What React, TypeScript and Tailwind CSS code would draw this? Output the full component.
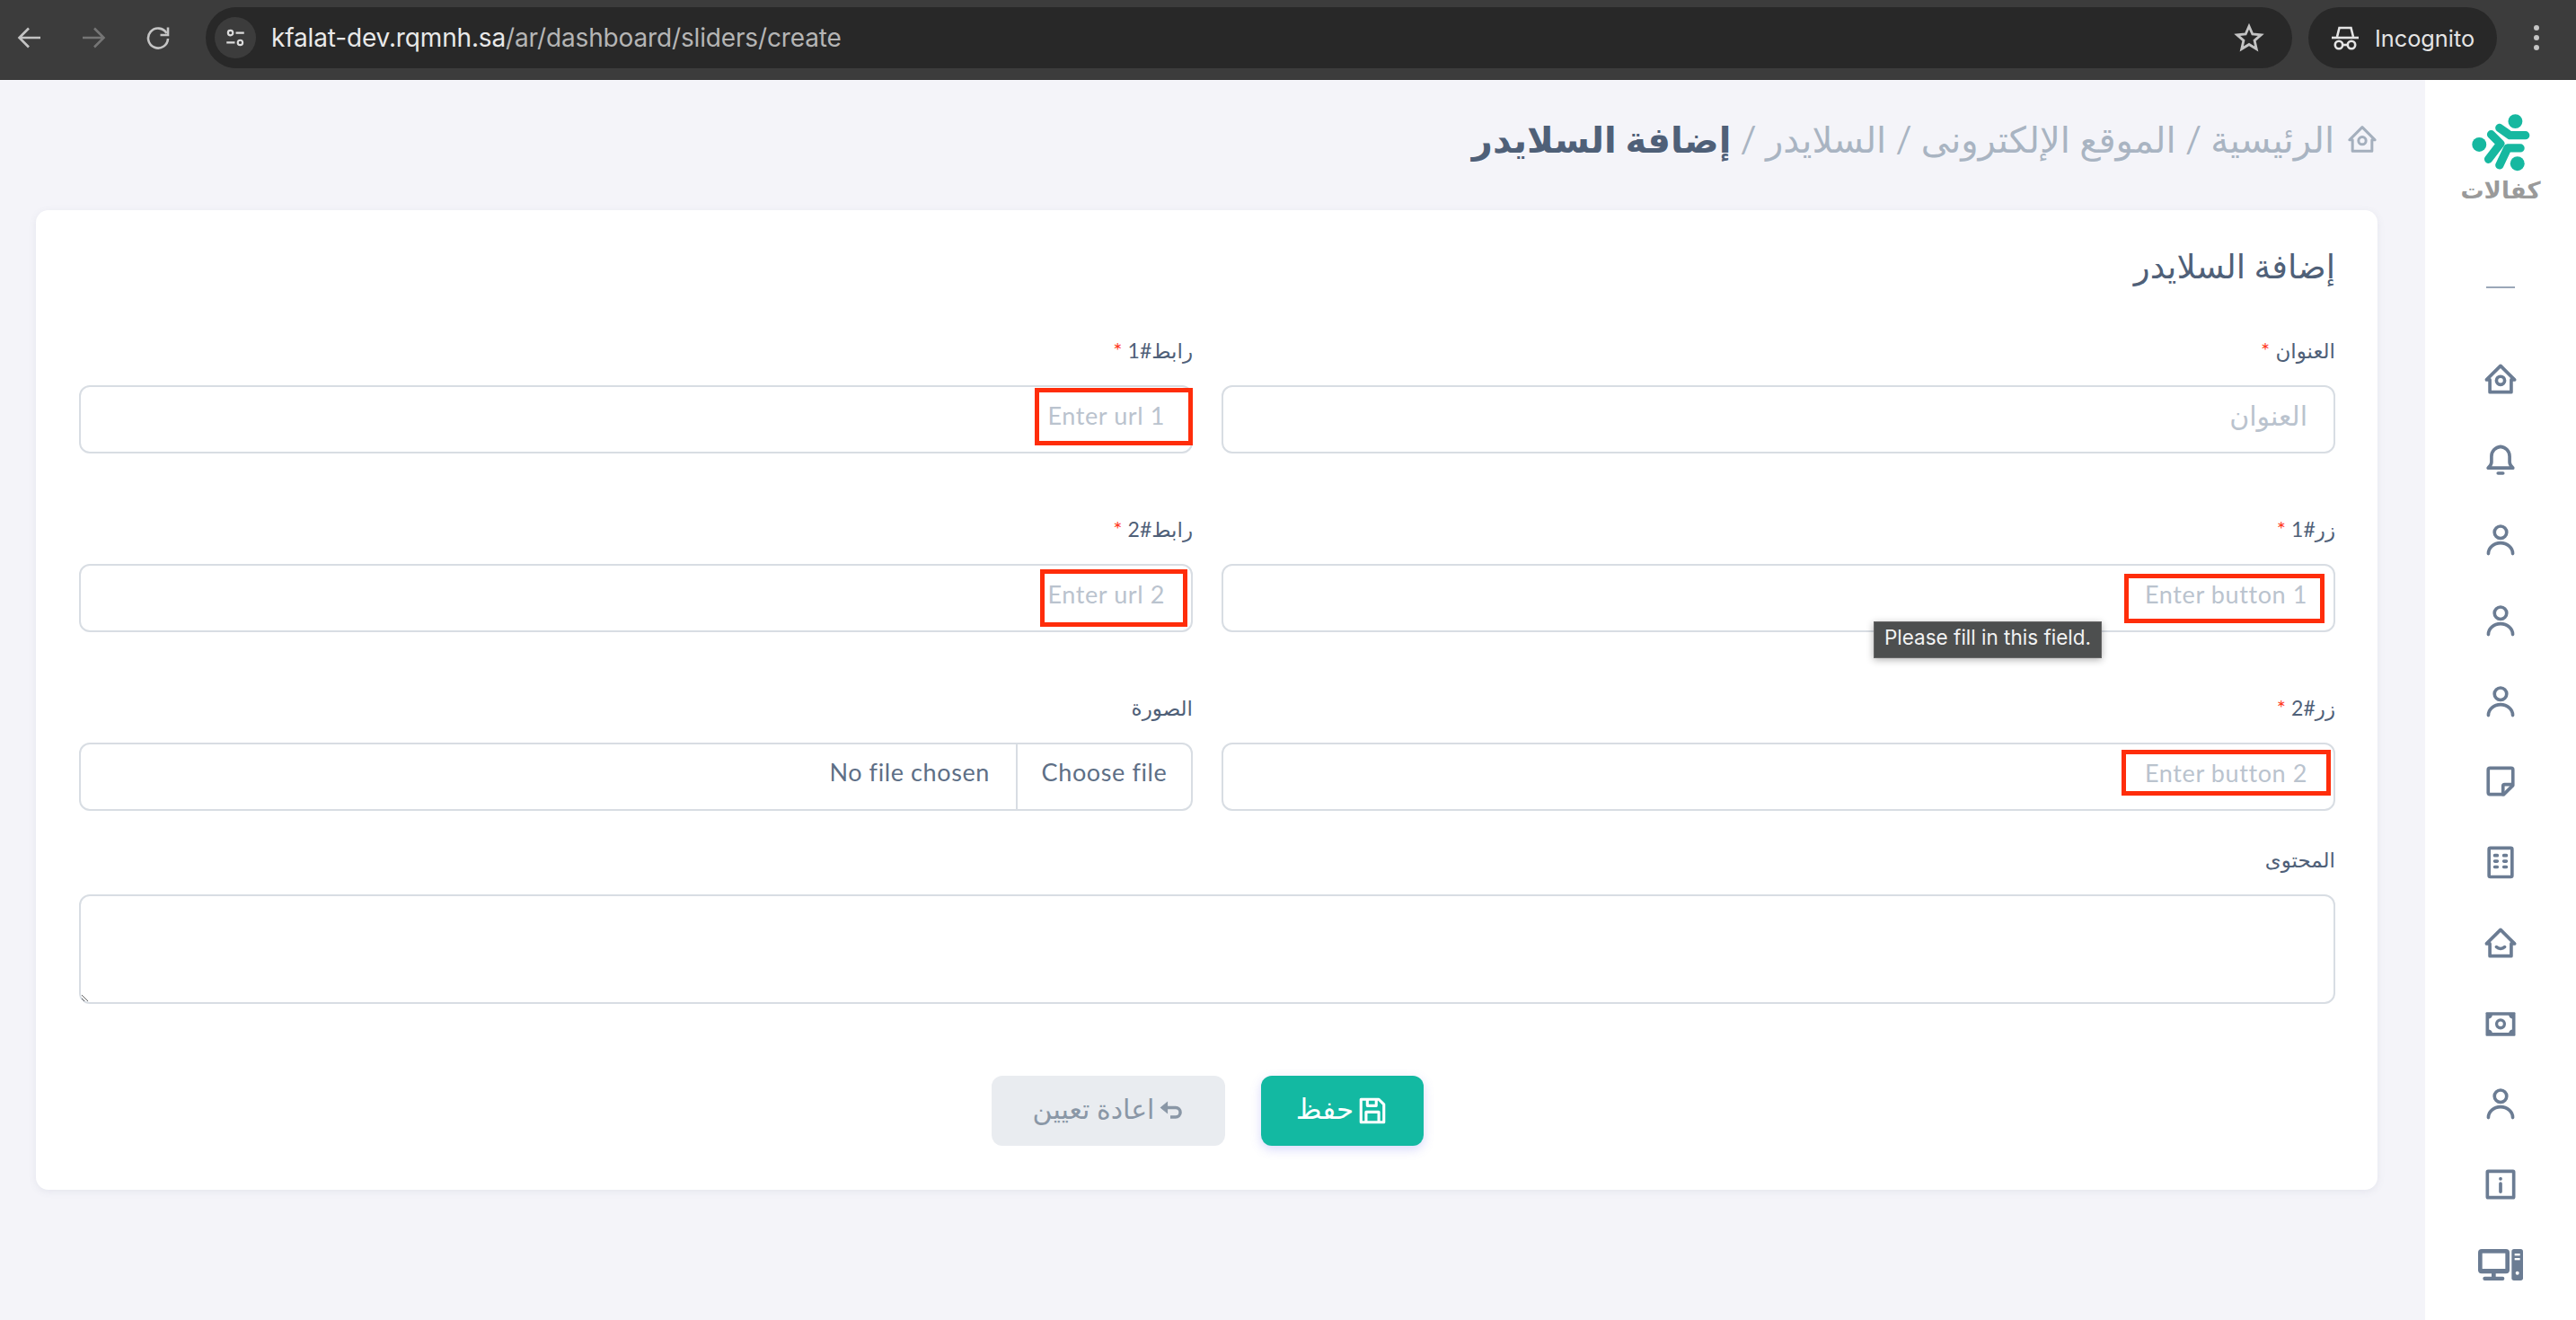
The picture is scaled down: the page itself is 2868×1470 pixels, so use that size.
import React from "react";

const Ico = ({ children }: { children: React.ReactNode }) => (
  <svg viewBox="0 0 24 24" className="w-[44px] h-[44px] text-[#6b7c93]" fill="none" stroke="currentColor" strokeWidth="2" strokeLinecap="round" strokeLinejoin="round">
    {children}
  </svg>
);

const homeBase = "M5.5 12.5H3.5L12 4l8.5 8.5h-2 M5.5 12.5V20h13v-7.5";

const HomeCircle = () => (
  <Ico>
    <path d={homeBase} />
    <circle cx="12" cy="13" r="2.5" />
  </Ico>
);
const Bell = () => (
  <Ico>
    <path d="M12 4a6 6 0 0 0-5.5 6v3.5c0 1.5-1 2.5-2 3.500h15c-1-1-2-2-2-3.500V10A6 6 0 0 0 12 4Z" />
    <path d="M10.500 20.200h3" />
  </Ico>
);
const User = () => (
  <Ico>
    <circle cx="12" cy="7.500" r="3.700" />
    <path d="M4.600 20.500a7.400 6.500 0 0 1 14.800 0" />
  </Ico>
);
const Note = () => (
  <Ico>
    <path d="M4.500 5a1 1 0 0 1 1-1h13a1 1 0 0 1 1 1v9.500L14 20H5.500a1 1 0 0 1-1-1Z" />
    <path d="M19 14h-4.500a1 1 0 0 0-1 1v5" />
  </Ico>
);
const Building = () => (
  <Ico>
    <rect x="5" y="3.500" width="14" height="17.500" rx="0.800" />
    <path d="M8.500 8h1.500M14 8h1.500M8.500 11.500h1.500M14 11.500h1.500M8.500 15h1.500M14 15h1.500" />
  </Ico>
);
const HomeSmile = () => (
  <Ico>
    <path d={homeBase} />
    <path d="M9.500 14.500a3.500 3.500 0 0 0 5 0" />
  </Ico>
);
const Cash = () => (
  <svg viewBox="0 0 24 24" className="w-[44px] h-[44px] text-[#6b7c93]">
    <rect x="3" y="5" width="18" height="14.500" rx="0.600" fill="currentColor" />
    <path d="M7 7h10a2.500 2.500 0 0 0 2 2v6.500a2.500 2.500 0 0 0-2 2H7a2.500 2.500 0 0 0-2-2V9a2.500 2.500 0 0 0 2-2Z" fill="#fff" />
    <circle cx="12" cy="12.200" r="2.400" fill="none" stroke="currentColor" strokeWidth="1.800" />
  </svg>
);
const Info = () => (
  <Ico>
    <rect x="4" y="4" width="16" height="16" rx="0.400" />
    <path d="M12 8.500v.2M12 11.500v5" />
  </Ico>
);
const Desktop = () => (
  <svg viewBox="0 0 150 105" className="w-[50px] h-[35px] text-[#6b7c93]" fill="currentColor">
    <rect x="0" y="0" width="105" height="82" rx="12" />
    <rect x="14" y="14" width="77" height="52" fill="#fff" />
    <rect x="45" y="80" width="14" height="14" />
    <rect x="16" y="92" width="72" height="13" rx="6" />
    <rect x="112" y="0" width="38" height="105" rx="8" />
    <rect x="122" y="15" width="18" height="7" fill="#fff" />
    <rect x="122" y="30" width="18" height="7" fill="#fff" />
    <circle cx="131" cy="80" r="6" fill="#fff" />
  </svg>
);

const Logo = () => (
  <svg viewBox="200 70 220 210" className="w-[73px] h-[70px]" fill="none" stroke="#16b8a0" strokeWidth="28" strokeLinecap="round" strokeLinejoin="round">
    <circle cx="358" cy="103" r="24" fill="#16b8a0" stroke="none" />
    <circle cx="237" cy="181" r="24" fill="#16b8a0" stroke="none" />
    <circle cx="365" cy="245" r="24" fill="#16b8a0" stroke="none" />
    <path d="M305 125 340 150H392" />
    <path d="M277 147 308 178 268 230" />
    <path d="M375 193H332L305 250" />
  </svg>
);

const RedBox = ({ className }: { className: string }) => (
  <div className={`absolute border-[5px] border-[#ff2d0a] pointer-events-none ${className}`} />
);

const Label = ({ text, req = true }: { text: string; req?: boolean }) => (
  <label className="block h-[30px] mb-[24px] text-[23px] leading-[30px] text-[#4f6078]">
    {text}
    {req && <span className="text-[#ff3b1f] text-[24px]"> *</span>}
  </label>
);

const inputCls =
  "block w-full h-[76px] rounded-[12px] border-2 border-[#d8dde3] bg-white pr-[29px] pl-[20px] pb-[10px] tracking-[0.6px] outline-none placeholder:text-[#bac3ce]";

const Field = ({ label, ph, strong, arabic, children }: { label: string; ph: string; strong?: boolean; arabic?: boolean; children?: React.ReactNode }) => (
  <div>
    <Label text={label} />
    <div className="relative">
      <input placeholder={ph} className={`${inputCls} ${arabic ? "text-[30px]" : "text-[27px]"} ${strong ? "border-[#c3c8d2]" : ""}`} />
      {children}
    </div>
  </div>
);

const Chrome = () => (
  <div dir="ltr" className="h-[89px] shrink-0 bg-[#3c3c3c] border-b border-[#333] flex items-center pb-[4px] font-[Inter,sans-serif]">
    <div className="w-[229px] shrink-0 flex items-center text-[#c4c4c4]">
      <svg viewBox="0 0 28 28" className="ml-[19px] w-[28px] h-[28px]" fill="none" stroke="currentColor" strokeWidth="2.600">
        <path d="M26 14H3M13 3.500 2.500 14 13 24.500" />
      </svg>
      <svg viewBox="0 0 28 28" className="ml-[43px] w-[28px] h-[28px] text-[#757575]" fill="none" stroke="currentColor" strokeWidth="2.600">
        <path d="M2 14h23M15 3.500 25.500 14 15 24.500" />
      </svg>
      <svg viewBox="0 0 28 28" className="ml-[44px] w-[28px] h-[28px]" fill="none" stroke="currentColor" strokeWidth="2.600">
        <path d="M23.500 9A11 11 0 1 0 25 15" />
        <path d="M25 2.500v8.500h-8.500" />
      </svg>
    </div>
    <div className="h-[68px] w-[2323px] rounded-full bg-[#282828] flex items-center pl-[10px] pr-[31px] shrink-0">
      <div className="w-[46px] h-[46px] rounded-full bg-[#3c3c3c] flex items-center justify-center">
        <svg viewBox="0 0 24 24" className="w-[26px] h-[26px]" fill="none" stroke="#dcdcdc" strokeWidth="2">
          <circle cx="7" cy="7" r="2.500" />
          <path d="M12.500 7H21M3 17h8.500" />
          <circle cx="17" cy="17" r="2.500" />
        </svg>
      </div>
      <div className="ml-[17px] text-[28px] tracking-[-0.15px] text-[#e9e9e9] whitespace-nowrap">
        kfalat-dev.rqmnh.sa<span className="text-[#b5b5b5]">/ar/dashboard/sliders/create</span>
      </div>
      <svg viewBox="0 0 24 24" className="ml-auto w-[34px] h-[34px]" fill="none" stroke="#c4c4c4" strokeWidth="2" strokeLinejoin="miter">
        <path d="m12 3 2.700 6.200 6.700.6-5.100 4.400 1.500 6.600L12 17.300l-5.800 3.500 1.500-6.600-5.100-4.400 6.700-.6Z" />
      </svg>
    </div>
    <div className="ml-[18px] h-[68px] w-[210px] rounded-full bg-[#282828] flex items-center pl-[26px] shrink-0">
      <svg viewBox="0 0 30 28" className="w-[30px] h-[28px]" fill="none" stroke="#e4e4e4" strokeWidth="2.600">
        <path d="M0 14h30" />
        <path d="M6 13 8.500 3h13L24 13" />
        <circle cx="8" cy="22" r="4.200" />
        <circle cx="22" cy="22" r="4.200" />
        <path d="M12 22h6" />
      </svg>
      <span className="ml-[18px] text-[25.300px] leading-[34px] pt-[2px] text-[#e4e4e4]">Incognito</span>
    </div>
    <div className="ml-[41px] flex flex-col gap-[5px]">
      <div className="w-[6px] h-[6px] rounded-full bg-[#c4c4c4]" />
      <div className="w-[6px] h-[6px] rounded-full bg-[#c4c4c4]" />
      <div className="w-[6px] h-[6px] rounded-full bg-[#c4c4c4]" />
    </div>
  </div>
);

const Sidebar = () => (
  <aside className="w-[168px] shrink-0 bg-white flex flex-col items-center">
    <div className="mt-[35px] h-[106px] flex flex-col items-center">
      <Logo />
      <div className="mt-[2px] text-[26px] leading-[32px] font-bold text-[#9a9a9a] font-['DejaVu_Sans',sans-serif]">كفالات</div>
    </div>
    <div className="mt-[89px] w-[32px] h-[2px] bg-[#9aa7b8]" />
    <div className="mt-[79px] flex flex-col items-center gap-[45.7px]">
      <HomeCircle />
      <Bell />
      <User />
      <User />
      <User />
      <Note />
      <Building />
      <HomeSmile />
      <Cash />
      <User />
      <Info />
      <div className="h-[44px] flex items-center"><Desktop /></div>
    </div>
  </aside>
);

export default function App() {
  return (
    <div className="w-[2868px] h-[1470px] flex flex-col overflow-hidden bg-[#f4f4f9] font-[Lato,'DejaVu_Sans',sans-serif]">
      <Chrome />
      <div dir="rtl" className="flex flex-1 min-h-0">
        <Sidebar />
        <main className="flex-1 min-w-0 pr-[53px] pl-[40px]">
          <div className="pt-[40px] pb-[53px] h-[145px] flex items-center gap-[11px]">
            <svg viewBox="0 0 24 24" className="-mr-[3px] w-[40px] h-[40px] text-[#a4afbd]" fill="none" stroke="currentColor" strokeWidth="1.800" strokeLinecap="round" strokeLinejoin="round">
              <path d={homeBase} />
              <circle cx="12" cy="13" r="2.500" />
            </svg>
            <div className="text-[40px] leading-[52px] text-[#a9b4c2] whitespace-nowrap">
              الرئيسية / الموقع الإلكترونى / السلايدر / <span className="font-bold text-[#4f6078]">إضافة السلايدر</span>
            </div>
          </div>
          <div className="bg-white rounded-[14px] shadow-[0_2px_8px_rgba(100,110,140,0.1)] pr-[47px] pl-[48px] pt-[42px] pb-[47px] h-[1091px]">
            <h2 className="h-[40px] mb-[59px] text-[37px] leading-[40px] text-[#4f6078]">إضافة السلايدر</h2>
            <div className="grid grid-cols-2 gap-x-[32px] gap-y-[69px] text-[#4f6078]">
              <Field label="العنوان" ph="العنوان" arabic />
              <Field label="رابط#1" ph="Enter url 1">
                <RedBox className="right-0 top-[3px] w-[176px] h-[64px]" />
              </Field>
              <Field label="زر#1" ph="Enter button 1" strong>
                <RedBox className="right-[12px] top-[11px] w-[223px] h-[55px]" />
                <div dir="ltr" className="absolute right-[260px] top-[64px] w-[254px] h-[41px] bg-[#4d4f4f] border border-[#666] shadow-[0_2px_8px_rgba(0,0,0,0.3)] text-[#f2f2f2] text-[22.500px] leading-[34px] text-center font-[Inter,sans-serif] z-10">
                  Please fill in this field.
                </div>
              </Field>
              <Field label="رابط#2" ph="Enter url 2">
                <RedBox className="right-[6px] top-[6px] w-[164px] h-[64px]" />
              </Field>
              <Field label="زر#2" ph="Enter button 2">
                <RedBox className="right-[5px] top-[8px] w-[233px] h-[51px]" />
              </Field>
              <div>
                <Label text="الصورة" req={false} />
                <div className="h-[76px] rounded-[12px] border-2 border-[#d8dde3] flex items-center text-[27px] tracking-[0.6px] text-[#5e6f86]">
                  <div dir="ltr" className="w-[195px] h-full border-l-2 border-[#d8dde3] flex items-center justify-center pb-[10px]">Choose file</div>
                  <div dir="ltr" className="mr-[29px] pb-[10px]">No file chosen</div>
                </div>
              </div>
            </div>
            <div className="mt-[39px]">
              <Label text="المحتوى" req={false} />
              <textarea className="block w-full h-[122px] rounded-[12px] border-2 border-[#d8dde3] outline-none" />
            </div>
            <div className="mt-[80px] flex justify-center gap-[40px]">
              <button className="w-[181px] h-[78px] rounded-[12px] bg-[#13b9a2] shadow-[0_4px_12px_rgba(99,102,241,0.25)] text-white text-[31px] flex items-center justify-center gap-[4px] pb-[6px]">
                <svg viewBox="0 0 24 24" className="w-[34px] h-[34px] mt-[6px]" fill="none" stroke="#fff" strokeWidth="2.200" strokeLinejoin="round">
                  <path d="M3 3h14l4 4v14H3Z" />
                  <path d="M8 3v5h7V3M7 21v-8h10v8" />
                </svg>
                حفظ
              </button>
              <button className="w-[260px] h-[78px] rounded-[12px] bg-[#e9ecf0] text-[#8a97a6] text-[30px] flex items-center justify-center gap-[4px] pb-[6px]">
                <svg viewBox="0 0 24 24" className="w-[28px] h-[28px] mt-[6px]" fill="none" stroke="#8a97a6" strokeWidth="3">
                  <path d="M8 9h9a4 4 0 0 1 0 9h-5" />
                  <path d="M9 4 3 9l6 5Z" fill="#8a97a6" strokeWidth="1" />
                </svg>
                اعادة تعيين
              </button>
            </div>
          </div>
        </main>
      </div>
    </div>
  );
}
